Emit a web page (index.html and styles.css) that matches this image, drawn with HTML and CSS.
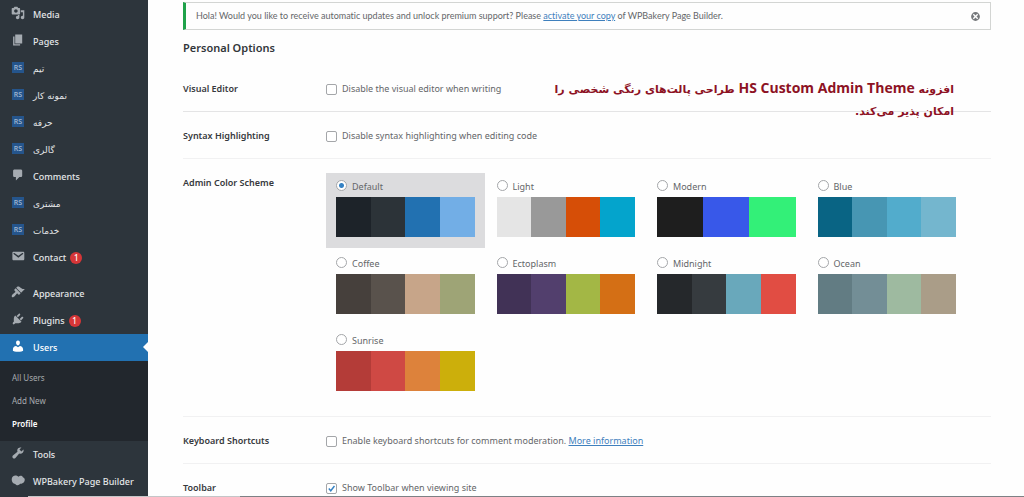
FILE: index.html
```html
<!DOCTYPE html>
<html lang="en">
<head>
<meta charset="utf-8">
<title>Profile</title>
<link rel="stylesheet" href="styles.css">
</head>
<body>
<svg class="sprite" aria-hidden="true">
  <symbol id="media" viewBox="0 0 20 20"><path fill-rule="evenodd" d="M13 11V4c0-.55-.45-1-1-1h-1.670L9 1H5L3.670 3H2c-.55 0-1 .45-1 1v7c0 .55.45 1 1 1h10c.55 0 1-.45 1-1zM7 4.500c1.380 0 2.500 1.120 2.500 2.500S8.380 9.500 7 9.500 4.500 8.380 4.500 7 5.620 4.500 7 4.500zM14 6h5v10.500c0 1.380-1.120 2.500-2.500 2.500S14 17.880 14 16.500s1.120-2.500 2.500-2.500c.17 0 .34.020.5.050V9h-3V6zm-4 8.050V13h2v3.500c0 1.380-1.120 2.500-2.500 2.500S7 17.880 7 16.500 8.120 14 9.500 14c.17 0 .34.020.5.050z"/></symbol>
  <symbol id="pages" viewBox="0 0 20 20"><path d="M6 15V2h10v13H6zm-1 1h8v2H3V5h2v11z"/></symbol>
  <symbol id="comments" viewBox="0 0 20 20"><path d="M5 2h9c1.100 0 2 .9 2 2v7c0 1.100-.9 2-2 2h-2l-5 5v-5H5c-1.100 0-2-.9-2-2V4c0-1.100.9-2 2-2z"/></symbol>
  <symbol id="mail" viewBox="0 0 20 20"><path d="M3.870 4h13.250C18.370 4 19 4.590 19 5.790v8.420c0 1.190-.63 1.790-1.880 1.790H3.870c-1.250 0-1.880-.6-1.880-1.790V5.790c0-1.200.63-1.790 1.880-1.790zm6.620 8.600l6.740-5.530c.24-.2.430-.66.130-1.070-.29-.41-.82-.42-1.170-.17l-5.700 3.860L4.800 5.830c-.35-.25-.88-.24-1.170.17-.3.410-.11.870.13 1.070z"/></symbol>
  <symbol id="brush" viewBox="0 0 20 20"><path d="M14.480 11.060L7.410 3.990l1.500-1.500c.5-.56 2.300-.47 3.510.320 1.210.8 1.430 1.280 2.910 2.100 1.180.64 2.450 1.260 4.450.85zm-.71.710L6.700 4.700 4.930 6.470c-.39.390-.39 1.020 0 1.410l1.060 1.060c.39.390.39 1.030 0 1.420-.6.600-1.430 1.110-2.210 1.690-.35.260-.7.530-1.010.840C1.430 14.230.4 16.080 1.400 17.070c.99 1 2.840-.03 4.180-1.360.31-.31.580-.66.850-1.020.57-.78 1.080-1.610 1.690-2.210.39-.39 1.020-.39 1.410 0l1.060 1.060c.39.390 1.020.39 1.410 0z"/></symbol>
  <symbol id="plug" viewBox="0 0 20 20"><path d="M13.110 4.360L9.870 7.600 8 5.730l3.240-3.240c.35-.34 1.050-.2 1.560.320.52.510.66 1.210.31 1.550zm-8 1.770l.91-1.120 9.010 9.010-1.190.84c-.71.710-2.630 1.160-3.820 1.160H6.140L4.900 17.260c-.59.590-1.540.59-2.120 0-.59-.58-.59-1.530 0-2.120l1.240-1.240v-3.880c0-1.130.4-3.190 1.090-3.890zm7.260 3.970l3.240-3.240c.34-.35 1.040-.21 1.550.310.52.510.66 1.210.31 1.550l-3.240 3.250z"/></symbol>
  <symbol id="user" viewBox="0 0 20 20"><path d="M10 9.250c-2.270 0-2.730-3.440-2.730-3.440C7 4.020 7.820 2 9.970 2c2.160 0 2.980 2.020 2.710 3.810 0 0-.41 3.440-2.680 3.440zm0 2.570L12.720 10c2.390 0 4.520 2.330 4.520 4.530v2.490s-3.650 1.130-7.240 1.130c-3.650 0-7.240-1.130-7.240-1.130v-2.490c0-2.250 1.940-4.480 4.470-4.480z"/></symbol>
  <symbol id="wrench" viewBox="0 0 20 20"><path d="M16.680 9.770c-1.340 1.340-3.300 1.670-4.950.99l-5.410 6.520c-.99.990-2.590.99-3.580 0s-.99-2.590 0-3.570l6.520-5.420c-.68-1.650-.35-3.610.99-4.950 1.280-1.280 3.120-1.620 4.720-1.060l-2.890 2.890 2.820 2.820 2.860-2.870c.53 1.580.18 3.390-1.080 4.650z"/></symbol>
  <symbol id="bakery" viewBox="0 0 20 20"><path d="M1 9c0-4 4-6.500 7.500-5 1 .4 1.700 1 2.300 1.300 2-2 5.200-1.300 6.200.6 2.700.7 3.500 4.400 1.700 7-1.500 2.200-4 2.600-5.700 2.400-1.200 2.400-5 3-7 .3C2.800 15.500 1 12.600 1 9z"/></symbol>
  <symbol id="close" viewBox="0 0 20 20"><path fill-rule="evenodd" d="M10 2a8 8 0 1 0 0 16 8 8 0 0 0 0-16zM6.900 5.100L10 8.200l3.100-3.100 1.800 1.800L11.800 10l3.100 3.100-1.800 1.800-3.100-3.100-3.100 3.100-1.800-1.800L8.200 10 5.100 6.900z"/></symbol>
</svg>
<div class="page">
  <nav class="sidebar" aria-label="Admin menu">
    <a class="item" href="#"><svg class="icon"><use href="#media"/></svg><span>Media</span></a>
    <a class="item" href="#"><svg class="icon"><use href="#pages"/></svg><span>Pages</span></a>
    <a class="item" href="#"><span class="rs">RS</span><span lang="fa">تیم</span></a>
    <a class="item" href="#"><span class="rs">RS</span><span lang="fa">نمونه کار</span></a>
    <a class="item" href="#"><span class="rs">RS</span><span lang="fa">حرفه</span></a>
    <a class="item" href="#"><span class="rs">RS</span><span lang="fa">گالری</span></a>
    <a class="item" href="#"><svg class="icon"><use href="#comments"/></svg><span>Comments</span></a>
    <a class="item" href="#"><span class="rs">RS</span><span lang="fa">مشتری</span></a>
    <a class="item" href="#"><span class="rs">RS</span><span lang="fa">خدمات</span></a>
    <a class="item" href="#"><svg class="icon"><use href="#mail"/></svg><span>Contact</span><span class="count">1</span></a>
    <a class="item group" href="#"><svg class="icon"><use href="#brush"/></svg><span>Appearance</span></a>
    <a class="item" href="#"><svg class="icon"><use href="#plug"/></svg><span>Plugins</span><span class="count">1</span></a>
    <a class="item current" href="#"><svg class="icon"><use href="#user"/></svg><span>Users</span></a>
    <div class="submenu">
      <a href="#">All Users</a>
      <a href="#">Add New</a>
      <a class="active" href="#">Profile</a>
    </div>
    <a class="item" href="#"><svg class="icon"><use href="#wrench"/></svg><span>Tools</span></a>
    <a class="item" href="#"><svg class="icon"><use href="#bakery"/></svg><span>WPBakery Page Builder</span></a>
  </nav>
  <main class="content">
    <div class="notice">
      <p>Hola! Would you like to receive automatic updates and unlock premium support? Please <a href="#">activate your copy</a> of WPBakery Page Builder.</p>
      <button class="dismiss" type="button" aria-label="Dismiss"><svg><use href="#close"/></svg></button>
    </div>
    <h2>Personal Options</h2>
    <p class="caption" lang="fa" dir="rtl">افزونه <span lang="en">HS Custom Admin Theme</span> طراحی پالت‌های رنگی شخصی را<br>امکان پذیر می‌کند.</p>
    <section class="row strong">
      <h3>Visual Editor</h3>
      <label class="check"><input type="checkbox"><span>Disable the visual editor when writing</span></label>
    </section>
    <section class="row">
      <h3>Syntax Highlighting</h3>
      <label class="check"><input type="checkbox"><span>Disable syntax highlighting when editing code</span></label>
    </section>
    <section class="row schemes">
      <h3>Admin Color Scheme</h3>
      <div class="palettes">
        <label class="scheme selected"><span class="name"><input type="radio" name="scheme" checked>Default</span><span class="swatches default"><i></i><i></i><i></i><i></i></span></label>
        <label class="scheme"><span class="name"><input type="radio" name="scheme">Light</span><span class="swatches light"><i></i><i></i><i></i><i></i></span></label>
        <label class="scheme"><span class="name"><input type="radio" name="scheme">Modern</span><span class="swatches modern"><i></i><i></i><i></i></span></label>
        <label class="scheme"><span class="name"><input type="radio" name="scheme">Blue</span><span class="swatches blue"><i></i><i></i><i></i><i></i></span></label>
        <label class="scheme"><span class="name"><input type="radio" name="scheme">Coffee</span><span class="swatches coffee"><i></i><i></i><i></i><i></i></span></label>
        <label class="scheme"><span class="name"><input type="radio" name="scheme">Ectoplasm</span><span class="swatches ectoplasm"><i></i><i></i><i></i><i></i></span></label>
        <label class="scheme"><span class="name"><input type="radio" name="scheme">Midnight</span><span class="swatches midnight"><i></i><i></i><i></i><i></i></span></label>
        <label class="scheme"><span class="name"><input type="radio" name="scheme">Ocean</span><span class="swatches ocean"><i></i><i></i><i></i><i></i></span></label>
        <label class="scheme"><span class="name"><input type="radio" name="scheme">Sunrise</span><span class="swatches sunrise"><i></i><i></i><i></i><i></i></span></label>
      </div>
    </section>
    <section class="row">
      <h3>Keyboard Shortcuts</h3>
      <div class="check"><input type="checkbox" id="keys"><span><label for="keys">Enable keyboard shortcuts for comment moderation.</label> <a href="#">More information</a></span></div>
    </section>
    <section class="row">
      <h3>Toolbar</h3>
      <label class="check"><input type="checkbox" checked><span>Show Toolbar when viewing site</span></label>
    </section>
  </main>
  <div class="edge"></div>
</div>
</body>
</html>
```
FILE: styles.css
```css
* { box-sizing: border-box; }
body {
  margin: 0;
  background: #fefefe;
  color: #646669;
  font: 9px/14px "Noto Sans", "DejaVu Sans", sans-serif;
}
h2, h3, p { margin: 0; }
a { color: #3f80bd; }
.sprite { display: none; }
.page {
  position: relative;
  display: flex;
  height: 100vh;
  overflow: hidden;
}

/* Sidebar */
.sidebar {
  flex: 0 0 148px;
  padding-top: 1px;
  background: #2d353c;
}
.item {
  position: relative;
  display: flex;
  align-items: center;
  height: 27px;
  padding-left: 11px;
  color: #e4e6e8;
  font-size: 9px;
  font-weight: 500;
  text-decoration: none;
}
.item [lang="fa"] { font-family: "DejaVu Sans", sans-serif; font-size: 9px; }
.icon {
  width: 14px;
  height: 14px;
  margin: 0 8px 3px 0;
  fill: #a5abb1;
}
.rs {
  width: 12px;
  margin: 0 9px 3px 1px;
  background: #25558c;
  color: #a9bdd4;
  font-size: 7px;
  line-height: 11px;
  text-align: center;
}
.count {
  width: 12px;
  margin-left: 4px;
  border-radius: 6px;
  background: #d63638;
  color: #fff;
  font-size: 8px;
  line-height: 12px;
  text-align: center;
}
.group { margin-top: 9px; }
.current { background: #2271b1; color: #fff; }
.current .icon { fill: #fff; }
.current::after {
  content: "";
  position: absolute;
  right: 0;
  top: 8px;
  border: 5px solid transparent;
  border-left-width: 0;
  border-right-color: #fefefe;
}
.submenu {
  padding: 5px 12px 6px;
  background: #22272d;
}
.submenu a {
  display: block;
  color: #a6aaae;
  font-size: 8px;
  line-height: 23px;
  text-decoration: none;
}
.submenu .active { color: #fff; font-weight: 600; }

/* Content */
.content {
  position: relative;
  flex: 1;
  padding: 2px 33px 0 35px;
}
.notice {
  display: flex;
  align-items: center;
  justify-content: space-between;
  height: 28px;
  padding: 0 9px 0 10px;
  border: 1px solid #d3d5d3;
  border-left: 3px solid #1fa24a;
  font-family: Lato, "Noto Sans", sans-serif;
  font-variant-ligatures: none;
}
.dismiss {
  display: flex;
  padding: 0;
  border: 0;
  background: none;
}
.dismiss svg { width: 11px; height: 11px; fill: #75787b; }
h2 {
  padding: 10px 0 9px;
  color: #32363a;
  font-size: 11px;
  font-weight: 600;
  line-height: 16px;
}
.row {
  display: flex;
  min-height: 47px;
  padding: 17px 0 15px;
  border-bottom: 1px solid #f1f1f2;
}
.row.strong { border-color: #e4e4e5; }
h3 {
  flex: 0 0 143px;
  color: #36393d;
  font-size: 9px;
  font-weight: 600;
  line-height: 14px;
}
.check {
  display: flex;
  align-items: center;
  gap: 5px;
  height: 14px;
}
input {
  appearance: none;
  width: 11px;
  height: 11px;
  margin: 0;
  border: 1px solid #a4a6a9;
  border-radius: 2px;
  background: #fff center / 9px no-repeat;
}
input[type="checkbox"]:checked {
  background-image: url("data:image/svg+xml,%3Csvg xmlns='http://www.w3.org/2000/svg' viewBox='0 0 10 10'%3E%3Cpath d='M2 5l2.200 2.500L8.300 2.200' fill='none' stroke='%233582c4' stroke-width='1.600'/%3E%3C/svg%3E");
}
input[type="radio"] { border-radius: 50%; }
input[type="radio"]:checked {
  background-image: radial-gradient(circle, #3582c4 2px, transparent 3px);
}

/* Colour schemes */
.schemes { padding: 14px 0; }
.schemes h3 { padding-top: 3px; }
.palettes {
  flex: 1;
  display: grid;
  grid-template-columns: repeat(4, 1fr);
  gap: 2px;
  max-width: 640px;
}
.scheme { padding: 6px 10px 11px; }
.selected { background: #dcdcde; }
.name {
  display: flex;
  align-items: center;
  gap: 5px;
  height: 18px;
  padding-bottom: 3px;
}
.name input { margin-bottom: 2px; }
.swatches { display: flex; height: 40px; }
.swatches i { flex: 1; }
.default i:nth-child(1) { background: #1d2329; }
.default i:nth-child(2) { background: #2c3338; }
.default i:nth-child(3) { background: #2271b1; }
.default i:nth-child(4) { background: #72aee6; }
.light i:nth-child(1) { background: #e5e5e5; }
.light i:nth-child(2) { background: #999; }
.light i:nth-child(3) { background: #d64e07; }
.light i:nth-child(4) { background: #04a4cc; }
.modern i:nth-child(1) { background: #1e1e1e; }
.modern i:nth-child(2) { background: #3858e9; }
.modern i:nth-child(3) { background: #33f078; }
.blue i:nth-child(1) { background: #096484; }
.blue i:nth-child(2) { background: #4796b3; }
.blue i:nth-child(3) { background: #52accc; }
.blue i:nth-child(4) { background: #74b6ce; }
.coffee i:nth-child(1) { background: #46403c; }
.coffee i:nth-child(2) { background: #59524c; }
.coffee i:nth-child(3) { background: #c7a589; }
.coffee i:nth-child(4) { background: #9ea476; }
.ectoplasm i:nth-child(1) { background: #413256; }
.ectoplasm i:nth-child(2) { background: #523f6d; }
.ectoplasm i:nth-child(3) { background: #a3b745; }
.ectoplasm i:nth-child(4) { background: #d46f15; }
.midnight i:nth-child(1) { background: #25282b; }
.midnight i:nth-child(2) { background: #363b3f; }
.midnight i:nth-child(3) { background: #69a8bb; }
.midnight i:nth-child(4) { background: #e14d43; }
.ocean i:nth-child(1) { background: #627c83; }
.ocean i:nth-child(2) { background: #738e96; }
.ocean i:nth-child(3) { background: #9ebaa0; }
.ocean i:nth-child(4) { background: #aa9d88; }
.sunrise i:nth-child(1) { background: #b43c38; }
.sunrise i:nth-child(2) { background: #cf4944; }
.sunrise i:nth-child(3) { background: #dd823b; }
.sunrise i:nth-child(4) { background: #ccaf0b; }

/* Annotation laid over the settings */
.caption {
  position: absolute;
  top: 79px;
  right: 70px;
  color: #8d1224;
  font: bold 11px/22px "DejaVu Sans", sans-serif;
  white-space: nowrap;
}
.caption span { font-family: "Open Sans", sans-serif; font-size: 14px; line-height: 1; }

/* Window edge */
.edge {
  position: absolute;
  right: 0;
  bottom: 0;
  left: 28px;
  height: 1px;
  background: linear-gradient(to right, #c4c6c8 212px, #7d8185 212px);
}
```
